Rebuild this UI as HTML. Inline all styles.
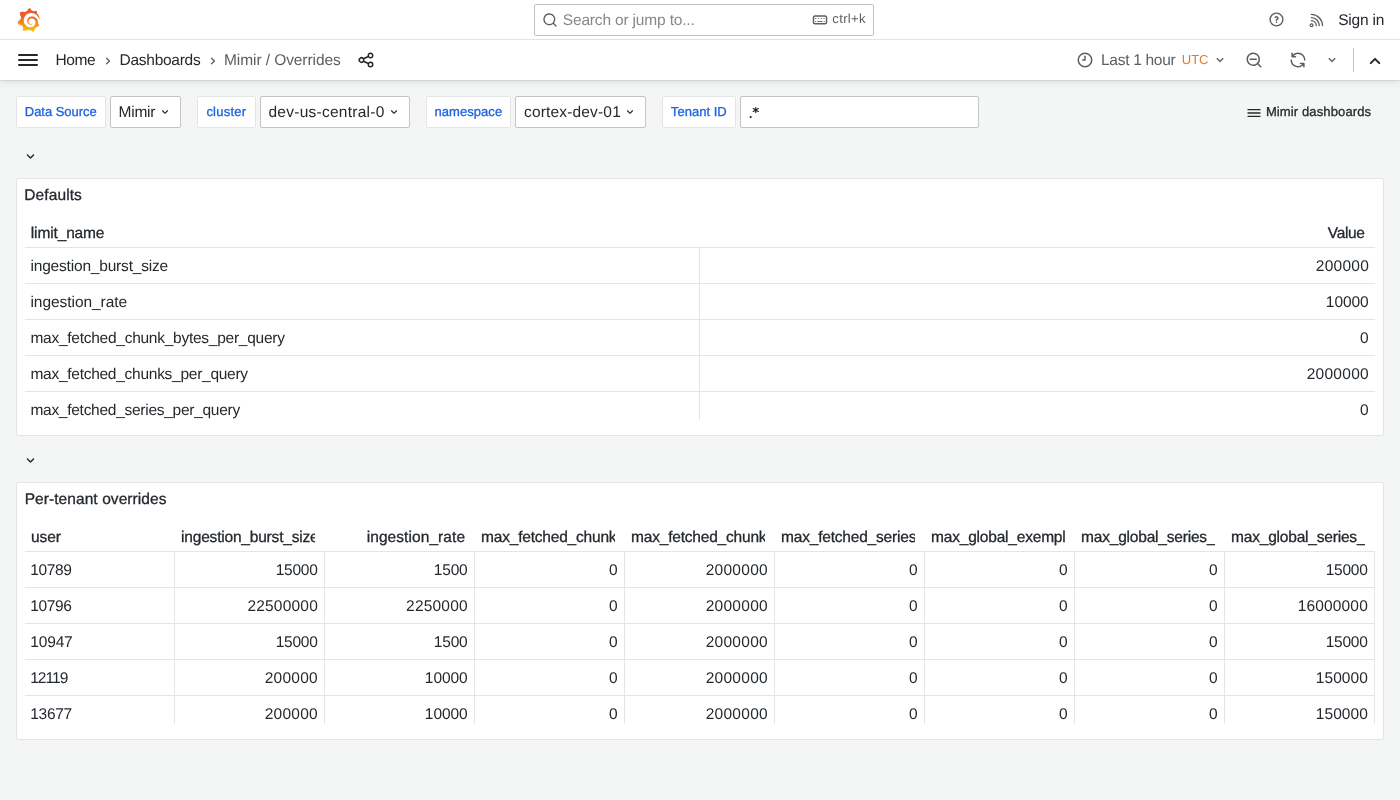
<!DOCTYPE html>
<html><head><meta charset="utf-8"><style>
*{box-sizing:border-box;margin:0;padding:0}
html,body{width:1400px;height:800px;overflow:hidden;background:#f4f5f5}
body{font-family:"Liberation Sans",sans-serif;color:#24292e;text-rendering:geometricPrecision}
#root{position:absolute;left:0;top:0;width:1400px;height:800px;background:#f4f5f5;will-change:transform;overflow:hidden}
.a{position:absolute}
.t{position:absolute;white-space:pre;line-height:20px}
svg{position:absolute;overflow:visible}
.lbl{position:absolute;top:96px;height:32px;background:#fff;border:1px solid #e4e5e6;border-radius:2px}
.sel{position:absolute;top:96px;height:32px;background:#fff;border:1px solid #c3c4c6;border-radius:2px}
.panel{position:absolute;left:16px;width:1368px;background:#fff;border:1px solid #e4e5e6;border-radius:2px}
.hl{position:absolute;height:1px;background:#e4e5e6}
.vl{position:absolute;width:1px;background:#e4e5e6}
</style></head><body><div id="root">
<div class="a" style="left:0;top:0;width:1400px;height:40px;background:#fff;border-bottom:1px solid #e4e5e6"></div>
<div class="a" style="left:0;top:40px;width:1400px;height:40px;background:#fff;box-shadow:0 1px 1px rgba(0,0,0,0.06),0 2px 4px rgba(0,0,0,0.05),0 4px 9px rgba(0,0,0,0.04)"></div>
<svg style="left:16.8px;top:8.2px" width="23.13" height="24.05" viewBox="0 0 351 365"><defs><linearGradient id="lg" gradientUnits="userSpaceOnUse" x1="175.5" y1="125" x2="175.5" y2="445"><stop offset="0" stop-color="#F05A28"/><stop offset="1" stop-color="#FFF100"/></linearGradient></defs><path fill="url(#lg)" d="M342,161.2c-0.6-6.1-1.6-13.1-3.6-20.9c-1.9-7.7-4.9-16.2-9.3-25c-4.4-8.8-10.2-17.9-17.7-26.8 c-2.9-3.5-6.1-6.9-9.5-10.2c5.1-20.3-6.2-37.9-6.2-37.9c-19.5-1.2-31.9,6.1-36.5,9.4c-0.8-0.3-1.5-0.7-2.3-1 c-3.3-1.300-6.7-2.6-10.3-3.7c-3.5-1.1-7.1-2.1-10.8-3c-3.7-0.9-7.4-1.6-11.2-2.2c-0.7-0.1-1.3-0.2-2-0.3 c-8.5-27.2-32.9-38.6-32.9-38.6c-27.3,17.3-32.4,41.5-32.4,41.5s-0.1,0.5-0.3,1.4c-1.5,0.4-3,0.9-4.5,1.3c-2.1,0.6-4.2,1.4-6.2,2.2 c-2.1,0.8-4.1,1.6-6.2,2.5c-4.1,1.8-8.2,3.8-12.2,6c-3.9,2.2-7.7,4.6-11.4,7.1c-0.5-0.2-1-0.4-1-0.4c-37.8-14.4-71.3,2.9-71.3,2.9 c-3.1,40.2,15.1,65.5,18.7,70.1c-0.9,2.5-1.7,5-2.5,7.5c-2.8,9.1-4.900,18.4-6.2,28.1c-0.2,1.4-0.4,2.8-0.5,4.2 C18.8,192.7,8.5,228,8.5,228c29.1,33.5,63.1,35.6,63.1,35.6c0,0,0.1-0.1,0.1-0.1c4.3,7.7,9.3,15,15,21.9c2.4,2.9,4.9,5.7,7.5,8.3 c-10.6,30.4,1.5,55.6,1.5,55.6c32.4,1.2,53.7-14.2,58.2-17.7c3.2,1.1,6.5,2.1,9.8,2.9c10,2.6,20.2,4.1,30.4,4.5 c2.5,0.1,5.1,0.2,7.6,0.1l1.2,0l0.8,0l1.6,0l1.6-0.1l0,0.1c15.3,21.8,42.1,24.9,42.1,24.9c19.1-20.1,20.2-40.1,20.2-44.4l0,0 c0,0,0-0.1,0-0.3c0-0.4,0-0.6,0-0.6l0,0c0-0.3,0-0.6,0-0.9c4-2.8,7.8-5.8,11.4-9.1c7.6-6.9,14.3-14.8,19.900-23.3 c0.5-0.8,1-1.6,1.5-2.4c21.6,1.2,36.9-13.4,36.9-13.4c-3.6-22.5-16.4-33.5-19.1-35.6l0,0c0,0-0.1-0.1-0.3-0.2 c-0.2-0.1-0.2-0.2-0.2-0.2c0,0,0,0,0,0c-0.1-0.1-0.3-0.2-0.5-0.3c0.1-1.4,0.2-2.7,0.3-4.1c0.2-2.4,0.2-4.9,0.2-7.3l0-1.8l0-0.9 l0-0.5c0-0.6,0-0.4,0-0.6l-0.1-1.5l-0.1-2c0-0.7-0.1-1.3-0.2-1.9c-0.1-0.6-0.1-1.3-0.2-1.9l-0.2-1.9l-0.3-1.9 c-0.4-2.5-0.8-4.9-1.4-7.4c-2.3-9.7-6.1-18.9-11-27.2c-5-8.3-11.2-15.6-18.3-21.8c-7-6.2-14.9-11.2-23.1-14.9 c-8.3-3.7-16.9-6.1-25.5-7.2c-4.3-0.6-8.6-0.8-12.9-0.7l-1.6,0l-0.4,0c-0.1,0-0.6,0-0.5,0l-0.7,0l-1.6,0.1c-0.6,0-1.2,0.1-1.7,0.1 c-2.2,0.2-4.4,0.5-6.5,0.9c-8.6,1.6-16.7,4.7-23.8,9c-7.1,4.3-13.3,9.6-18.3,15.6c-5,6-8.9,12.7-11.6,19.6c-2.7,6.9-4.2,14.1-4.6,21 c-0.1,1.7-0.1,3.5-0.1,5.2c0,0.4,0,0.9,0,1.3l0.1,1.4c0.1,0.8,0.1,1.7,0.2,2.5c0.3,3.5,1,6.9,1.9,10.1c1.9,6.5,4.9,12.4,8.6,17.4 c3.7,5,8.2,9.1,12.9,12.4c4.7,3.2,9.8,5.5,14.8,7c5,1.5,10,2.1,14.7,2.1c0.6,0,1.2,0,1.7,0c0.3,0,0.6,0,0.9,0c0.3,0,0.6,0,0.9-0.1 c0.5,0,1-0.1,1.5-0.1c0.1,0,0.3,0,0.4-0.1l0.5-0.1c0.3,0,0.6-0.1,0.9-0.1c0.6-0.1,1.1-0.2,1.7-0.3c0.6-0.1,1.1-0.2,1.6-0.4 c1.1-0.2,2.1-0.6,3.1-0.9c2-0.7,4-1.5,5.7-2.4c1.8-0.9,3.4-2,5-3c0.4-0.3,0.9-0.6,1.3-1c1.6-1.3,1.9-3.7,0.6-5.3 c-1.1-1.4-3.1-1.8-4.7-0.9c-0.4,0.2-0.8,0.4-1.2,0.6c-1.4,0.7-2.8,1.3-4.3,1.8c-1.5,0.5-3.1,0.9-4.7,1.2c-0.8,0.1-1.6,0.2-2.5,0.3 c-0.4,0-0.8,0.1-1.3,0.1c-0.4,0-0.9,0-1.2,0c-0.4,0-0.8,0-1.2,0c-0.5,0-1,0-1.5-0.1c0,0-0.3,0-0.1,0l-0.2,0l-0.3,0 c-0.2,0-0.5,0-0.7-0.1c-0.5-0.1-0.9-0.1-1.4-0.2c-3.7-0.5-7.4-1.6-10.9-3.2c-3.6-1.6-7-3.8-10.1-6.6c-3.1-2.8-5.8-6.1-7.9-9.9 c-2.1-3.8-3.6-8-4.3-12.4c-0.3-2.2-0.5-4.5-0.4-6.7c0-0.6,0.1-1.2,0.1-1.8c0,0.2,0-0.1,0-0.1l0-0.2l0-0.5c0-0.3,0.1-0.6,0.1-0.9 c0.1-1.2,0.3-2.4,0.5-3.6c1.7-9.6,6.5-19,13.9-26.1c1.9-1.8,3.9-3.4,6-4.9c2.1-1.5,4.4-2.8,6.8-3.9c2.4-1.1,4.8-2,7.4-2.7 c2.5-0.7,5.1-1.1,7.8-1.4c1.3-0.1,2.6-0.2,4-0.2c0.4,0,0.6,0,0.9,0l1.1,0l0.7,0c0.3,0,0,0,0.1,0l0.3,0l1.1,0.1 c2.9,0.2,5.7,0.6,8.5,1.3c5.6,1.2,11.1,3.3,16.2,6.1c10.2,5.7,18.9,14.5,24.2,25.1c2.7,5.3,4.6,11,5.5,16.9c0.2,1.5,0.4,3,0.5,4.5 l0.1,1.1l0.1,1.1c0,0.4,0,0.8,0,1.1c0,0.4,0,0.8,0,1.1l0,1l0,1.1c0,0.7-0.1,1.9-0.1,2.6c-0.1,1.6-0.3,3.3-0.5,4.9 c-0.2,1.6-0.5,3.2-0.8,4.8c-0.3,1.6-0.7,3.2-1.1,4.7c-0.8,3.1-1.8,6.2-3,9.3c-2.4,6-5.6,11.8-9.4,17.1 c-7.7,10.6-18.2,19.2-30.2,24.7c-6,2.7-12.3,4.7-18.8,5.7c-3.2,0.6-6.5,0.9-9.8,1l-0.6,0l-0.5,0l-1.1,0l-1.6,0l-0.8,0 c0.4,0-0.1,0-0.1,0l-0.3,0c-1.8,0-3.5-0.1-5.3-0.3c-7-0.5-13.9-1.8-20.6-3.7c-6.7-1.9-13.2-4.6-19.4-7.8 c-12.3-6.6-23.4-15.6-32-26.5c-4.3-5.4-8.1-11.3-11.2-17.4c-3.1-6.1-5.6-12.6-7.4-19.1c-1.8-6.6-2.9-13.3-3.4-20.1l-0.1-1.3l0-0.3 l0-0.3l0-0.6l0-1.1l0-0.3l0-0.4l0-0.8l0-1.6l0-0.3c0,0,0,0.1,0-0.1l0-0.6c0-0.8,0-1.7,0-2.5c0.1-3.3,0.4-6.8,0.8-10.2 c0.4-3.4,1-6.9,1.7-10.3c0.7-3.4,1.5-6.8,2.5-10.2c1.9-6.7,4.3-13.2,7.1-19.3c5.7-12.2,13.1-23.1,22-31.8c2.2-2.2,4.5-4.2,6.9-6.2 c2.4-1.9,4.9-3.7,7.5-5.4c2.5-1.7,5.2-3.2,7.9-4.6c1.3-0.7,2.7-1.4,4.1-2c0.7-0.3,1.4-0.6,2.1-0.9c0.7-0.3,1.4-0.6,2.1-0.9 c2.8-1.2,5.7-2.2,8.7-3.1c0.7-0.2,1.5-0.4,2.2-0.7c0.7-0.2,1.5-0.4,2.2-0.6c1.5-0.4,3-0.8,4.5-1.1c0.7-0.2,1.5-0.3,2.3-0.5 c0.8-0.2,1.5-0.3,2.3-0.5c0.8-0.1,1.5-0.3,2.3-0.4l1.1-0.2l1.2-0.2c0.8-0.1,1.5-0.2,2.3-0.3c0.9-0.1,1.7-0.2,2.6-0.3 c0.7-0.1,1.9-0.2,2.6-0.3c0.5-0.1,1.1-0.1,1.6-0.2l1.1-0.1l0.5,0l0.6,0c0.9-0.1,1.7-0.1,2.6-0.2l1.3-0.1c0,0,0.5,0,0.1,0l0.3,0 l0.6,0c0.7,0,1.5-0.1,2.2-0.1c2.9-0.1,5.9-0.1,8.8,0c5.8,0.2,11.5,0.9,17,1.9c11.1,2.1,21.5,5.6,31,10.3 c9.5,4.6,17.9,10.3,25.3,16.5c0.5,0.4,0.9,0.8,1.4,1.2c0.4,0.4,0.9,0.8,1.3,1.2c0.9,0.8,1.7,1.6,2.6,2.4c0.9,0.8,1.7,1.6,2.5,2.4 c0.8,0.8,1.6,1.6,2.4,2.5c3.1,3.3,6,6.6,8.6,10c5.2,6.7,9.4,13.5,12.7,19.9c0.2,0.4,0.4,0.8,0.6,1.2c0.2,0.4,0.4,0.8,0.6,1.2 c0.4,0.8,0.8,1.6,1.1,2.4c0.4,0.8,0.7,1.5,1.1,2.3c0.3,0.8,0.7,1.5,1,2.3c1.2,3,2.4,5.9,3.3,8.6c1.5,4.4,2.6,8.3,3.5,11.7 c0.3,1.4,1.6,2.3,3,2.1c1.5-0.1,2.6-1.3,2.6-2.8C342.6,170.4,342.5,166.1,342,161.2z"/></svg>
<div class="a" style="left:534px;top:4px;width:340px;height:32px;border:1px solid #c3c4c6;border-radius:2px;background:#fff"></div>
<svg style="left:541.8px;top:11.8px" width="16" height="16" viewBox="0 0 24 24"><path fill="#5b5f63" d="M21.71,20.29,18,16.61A9,9,0,1,0,16.61,18l3.68,3.68a1,1,0,0,0,1.42,0A1,1,0,0,0,21.71,20.29ZM11,18a7,7,0,1,1,7-7A7,7,0,0,1,11,18Z"/></svg>
<svg style="left:805px;top:8px" width="24" height="24" viewBox="0 0 24 24"><rect x="8.45" y="7.95" width="13.1" height="7.85" rx="1.6" fill="none" stroke="#5b5f63" stroke-width="1.45"/><g fill="#5b5f63"><rect x="9.9" y="10.1" width="1.2" height="0.85"/><rect x="12.65" y="10.1" width="1.2" height="0.85"/><rect x="15.65" y="10.1" width="1.2" height="0.85"/><rect x="18.4" y="10.1" width="1.2" height="0.85"/><rect x="9.9" y="13" width="1.2" height="0.85"/><rect x="12.4" y="13" width="5" height="0.9"/><rect x="18.65" y="13" width="1.2" height="0.85"/></g></svg>
<svg style="left:1268.4px;top:11.4px" width="17" height="17" viewBox="0 0 24 24"><path fill="#5b5f63" d="M11.29,15.29a1.58,1.58,0,0,0-.12.15.76.76,0,0,0-.09.18.64.64,0,0,0-.06.18,1.36,1.36,0,0,0,0,.2.84.84,0,0,0,.08.38.9.9,0,0,0,.54.54.94.94,0,0,0,.76,0,.9.9,0,0,0,.54-.54A1,1,0,0,0,13,16a1,1,0,0,0-.29-.71A1,1,0,0,0,11.29,15.29ZM12,2A10,10,0,1,0,22,12,10,10,0,0,0,12,2Zm0,18a8,8,0,1,1,8-8A8,8,0,0,1,12,20ZM12,7A3,3,0,0,0,9.4,8.5a1,1,0,1,0,1.73,1A1,1,0,0,1,12,9a1,1,0,0,1,0,2,1,1,0,0,0-1,1v1a1,1,0,0,0,2,0v-.18A3,3,0,0,0,12,7Z"/></svg>
<svg style="left:1304px;top:8px" width="24" height="24" viewBox="0 0 24 24"><g fill="none" stroke="#5b5f63" stroke-width="1.35" stroke-linecap="round"><path d="M7.4 12.6A5.1 5.1 0 0 1 12.3 17.6M7.4 9.6A8.1 8.1 0 0 1 15.3 17.6M7.4 6.45A11.2 11.2 0 0 1 18.5 17.6"/><circle cx="7.6" cy="17.2" r="1.45" stroke-width="1.25"/></g></svg>
<svg style="left:16px;top:48px" width="24" height="24" viewBox="0 0 24 24"><path fill="#24292e" d="M3,8H21a1,1,0,0,0,0-2H3A1,1,0,0,0,3,8Zm18,8H3a1,1,0,0,0,0,2H21a1,1,0,0,0,0-2Zm0-5H3a1,1,0,0,0,0,2H21a1,1,0,0,0,0-2Z"/></svg>
<svg style="left:99.8px;top:52.9px" width="16" height="16" viewBox="0 0 24 24"><path fill="#5b5f63" d="M14.83,11.29,10.59,7.05a1,1,0,0,0-1.42,0,1,1,0,0,0,0,1.41L12.71,12,9.17,15.54a1,1,0,0,0,0,1.41,1,1,0,0,0,.71.3,1,1,0,0,0,.71-.3l4.24-4.24A1,1,0,0,0,14.83,11.29Z"/></svg>
<svg style="left:205px;top:52.9px" width="16" height="16" viewBox="0 0 24 24"><path fill="#5b5f63" d="M14.83,11.29,10.59,7.05a1,1,0,0,0-1.42,0,1,1,0,0,0,0,1.41L12.71,12,9.17,15.54a1,1,0,0,0,0,1.41,1,1,0,0,0,.71.3,1,1,0,0,0,.71-.3l4.24-4.24A1,1,0,0,0,14.83,11.29Z"/></svg>
<svg style="left:357.2px;top:50.85px" width="18" height="18" viewBox="0 0 24 24"><path fill="#24292e" d="M18,14a4,4,0,0,0-3.08,1.48l-5.1-2.35a3.64,3.64,0,0,0,0-2.26l5.1-2.35A4,4,0,1,0,14,6a4.17,4.17,0,0,0,.07.71L8.79,9.14a4,4,0,1,0,0,5.72l5.28,2.43A4.170,4.17,0,0,0,14,18a4,4,0,1,0,4-4ZM18,4a2,2,0,1,1-2,2A2,2,0,0,1,18,4ZM6,14a2,2,0,1,1,2-2A2,2,0,0,1,6,14Zm12,6a2,2,0,1,1,2-2A2,2,0,0,1,18,20Z"/></svg>
<svg style="left:1076px;top:51px" width="18" height="18" viewBox="0 0 24 24"><path fill="#5b5f63" d="M12,2A10,10,0,1,0,22,12,10,10,0,0,0,12,2Zm0,18a8,8,0,1,1,8-8A8,8,0,0,1,12,20Zm0-14a1,1,0,0,0-1,1v4H9a1,1,0,0,0,0,2h3a1,1,0,0,0,1-1V7A1,1,0,0,0,12,6Z"/></svg>
<svg style="left:1212px;top:52px" width="16" height="16" viewBox="0 0 24 24"><path fill="#5b5f63" d="M17,9.17a1,1,0,0,0-1.41,0L12,12.71,8.46,9.17a1,1,0,0,0-1.41,0,1,1,0,0,0,0,1.42l4.24,4.24a1,1,0,0,0,1.42,0L17,10.59A1,1,0,0,0,17,9.17Z"/></svg>
<svg style="left:1245px;top:51px" width="18" height="18" viewBox="0 0 24 24"><path fill="#5b5f63" d="M21.71,20.29,18,16.61A9,9,0,1,0,16.61,18l3.68,3.68a1,1,0,0,0,1.42,0A1,1,0,0,0,21.71,20.29ZM11,18a7,7,0,1,1,7-7A7,7,0,0,1,11,18Zm4-8H7a1,1,0,0,0,0,2h8a1,1,0,0,0,0-2Z"/></svg>
<svg style="left:1289px;top:51px" width="18" height="18" viewBox="0 0 24 24"><path fill="#5b5f63" d="M19.91,15.51H15.38a1,1,0,0,0,0,2h2.4A8,8,0,0,1,4,12a1,1,0,0,0-2,0,10,10,0,0,0,16.88,7.23V21a1,1,0,0,0,2,0V16.5A1,1,0,0,0,19.91,15.51ZM12,2A10,10,0,0,0,5.12,4.77V3a1,1,0,0,0-2,0V7.5a1,1,0,0,0,1,1h4.5a1,1,0,0,0,0-2H6.22A8,8,0,0,1,20,12a1,1,0,0,0,2,0A10,10,0,0,0,12,2Z"/></svg>
<svg style="left:1324px;top:52px" width="16" height="16" viewBox="0 0 24 24"><path fill="#5b5f63" d="M17,9.17a1,1,0,0,0-1.41,0L12,12.71,8.46,9.17a1,1,0,0,0-1.41,0,1,1,0,0,0,0,1.42l4.24,4.24a1,1,0,0,0,1.42,0L17,10.59A1,1,0,0,0,17,9.17Z"/></svg>
<div class="a" style="left:1353px;top:48px;width:1px;height:24px;background:#c3c4c6"></div>
<svg style="left:1362.85px;top:48.7px" width="24" height="24" viewBox="0 0 24 24"><path fill="#24292e" d="M17,13.41,12.71,9.17a1,1,0,0,0-1.42,0L7.05,13.41a1,1,0,0,0,0,1.42,1,1,0,0,0,1.41,0L12,11.29l3.54,3.54a1,1,0,0,0,.7.29,1,1,0,0,0,.71-.29A1,1,0,0,0,17,13.41Z"/></svg>
<div class="lbl" style="left:16px;width:90px"></div>
<div class="sel" style="left:110px;width:71px"></div><svg style="left:158.05px;top:104.6px" width="14" height="14" viewBox="0 0 24 24"><path fill="#24292e" d="M17,9.17a1,1,0,0,0-1.41,0L12,12.71,8.46,9.17a1,1,0,0,0-1.41,0,1,1,0,0,0,0,1.42l4.24,4.24a1,1,0,0,0,1.42,0L17,10.59A1,1,0,0,0,17,9.17Z"/></svg>
<div class="lbl" style="left:197px;width:59px"></div>
<div class="sel" style="left:260px;width:150px"></div><svg style="left:387px;top:104.8px" width="14" height="14" viewBox="0 0 24 24"><path fill="#24292e" d="M17,9.17a1,1,0,0,0-1.41,0L12,12.71,8.46,9.17a1,1,0,0,0-1.41,0,1,1,0,0,0,0,1.42l4.24,4.24a1,1,0,0,0,1.42,0L17,10.59A1,1,0,0,0,17,9.17Z"/></svg>
<div class="lbl" style="left:426px;width:85px"></div>
<div class="sel" style="left:515px;width:131px"></div><svg style="left:623.1px;top:104.8px" width="14" height="14" viewBox="0 0 24 24"><path fill="#24292e" d="M17,9.17a1,1,0,0,0-1.41,0L12,12.71,8.46,9.17a1,1,0,0,0-1.41,0,1,1,0,0,0,0,1.42l4.24,4.24a1,1,0,0,0,1.42,0L17,10.59A1,1,0,0,0,17,9.17Z"/></svg>
<div class="lbl" style="left:662px;width:74px"></div>
<div class="sel" style="left:740px;width:239px"></div>
<svg style="left:740px;top:100px" width="30" height="25" viewBox="0 0 30 25"><rect x="9.75" y="16.1" width="1.8" height="1.8" rx="0.4" fill="#24292e"/><g stroke="#24292e" stroke-width="1.25" stroke-linecap="round"><path d="M15.75 7.5v4.9M13.2 8.55l5.1 2.9M13.2 11.45l5.1-2.9"/></g></svg>
<svg style="left:1245.7px;top:104.6px" width="16" height="16" viewBox="0 0 24 24"><path fill="#24292e" d="M3,8H21a1,1,0,0,0,0-2H3A1,1,0,0,0,3,8Zm18,8H3a1,1,0,0,0,0,2H21a1,1,0,0,0,0-2Zm0-5H3a1,1,0,0,0,0,2H21a1,1,0,0,0,0-2Z"/></svg>
<svg style="left:22px;top:147.9px" width="17" height="17" viewBox="0 0 24 24"><path fill="#24292e" d="M17,9.17a1,1,0,0,0-1.41,0L12,12.71,8.46,9.17a1,1,0,0,0-1.41,0,1,1,0,0,0,0,1.42l4.24,4.24a1,1,0,0,0,1.42,0L17,10.59A1,1,0,0,0,17,9.17Z"/></svg>
<svg style="left:21.8px;top:451.7px" width="17" height="17" viewBox="0 0 24 24"><path fill="#24292e" d="M17,9.17a1,1,0,0,0-1.41,0L12,12.71,8.46,9.17a1,1,0,0,0-1.41,0,1,1,0,0,0,0,1.42l4.24,4.24a1,1,0,0,0,1.42,0L17,10.59A1,1,0,0,0,17,9.17Z"/></svg>
<div class="panel" style="top:178px;height:258px"></div>
<div class="hl" style="left:25px;top:247px;width:1350px"></div>
<div class="hl" style="left:25px;top:283px;width:1350px"></div>
<div class="hl" style="left:25px;top:319px;width:1350px"></div>
<div class="hl" style="left:25px;top:355px;width:1350px"></div>
<div class="hl" style="left:25px;top:391px;width:1350px"></div>
<div class="vl" style="left:699px;top:248px;height:172px"></div>
<div class="panel" style="top:482px;height:258px"></div>
<div class="hl" style="left:25px;top:551px;width:1350px"></div>
<div class="hl" style="left:25px;top:587px;width:1350px"></div>
<div class="hl" style="left:25px;top:623px;width:1350px"></div>
<div class="hl" style="left:25px;top:659px;width:1350px"></div>
<div class="hl" style="left:25px;top:695px;width:1350px"></div>
<div class="vl" style="left:174px;top:552px;height:172px"></div>
<div class="vl" style="left:324px;top:552px;height:172px"></div>
<div class="vl" style="left:474px;top:552px;height:172px"></div>
<div class="vl" style="left:624px;top:552px;height:172px"></div>
<div class="vl" style="left:774px;top:552px;height:172px"></div>
<div class="vl" style="left:924px;top:552px;height:172px"></div>
<div class="vl" style="left:1074px;top:552px;height:172px"></div>
<div class="vl" style="left:1224px;top:552px;height:172px"></div>
<div class="vl" style="left:1374px;top:552px;height:172px"></div>
<div class="t" style="left:562.80px;top:11px;font-size:15.5px;color:#85888c;letter-spacing:-0.172px">Search or jump to...</div>
<div class="t" style="left:832.32px;top:9px;font-size:13px;color:#5b5f63;letter-spacing:0.363px">ctrl+k</div>
<div class="t" style="left:1338.20px;top:11px;font-size:15.5px;color:#24292e;letter-spacing:-0.209px">Sign in</div>
<div class="t" style="left:55.62px;top:51px;font-size:15.5px;color:#24292e;letter-spacing:-0.439px">Home</div>
<div class="t" style="left:119.52px;top:51px;font-size:15.5px;color:#24292e;letter-spacing:-0.263px">Dashboards</div>
<div class="t" style="left:224.02px;top:51px;font-size:15.5px;color:#5b5f63;letter-spacing:-0.08px">Mimir / Overrides</div>
<div class="t" style="left:1101.02px;top:51px;font-size:15.5px;color:#5b5f63;letter-spacing:-0.292px">Last 1 hour</div>
<div class="t" style="left:1181.80px;top:50px;font-size:13px;color:#e8781e;letter-spacing:-0.05px">UTC</div>
<div class="t" style="left:24.79px;top:102px;font-size:13px;color:#1f62e0;letter-spacing:-0.036px;-webkit-text-stroke:0.3px #1f62e0">Data Source</div>
<div class="t" style="left:118.42px;top:103px;font-size:15.5px;color:#24292e;letter-spacing:-0.189px">Mimir</div>
<div class="t" style="left:206.39px;top:102px;font-size:13px;color:#1f62e0;letter-spacing:0.23px;-webkit-text-stroke:0.3px #1f62e0">cluster</div>
<div class="t" style="left:268.49px;top:103px;font-size:15.5px;color:#24292e;letter-spacing:0.259px">dev-us-central-0</div>
<div class="t" style="left:434.43px;top:102px;font-size:13px;color:#1f62e0;letter-spacing:0.061px;-webkit-text-stroke:0.3px #1f62e0">namespace</div>
<div class="t" style="left:524.09px;top:103px;font-size:15.5px;color:#24292e;letter-spacing:0.159px">cortex-dev-01</div>
<div class="t" style="left:670.87px;top:102px;font-size:13px;color:#1f62e0;letter-spacing:0.031px;-webkit-text-stroke:0.3px #1f62e0">Tenant ID</div>
<div class="t" style="left:1265.89px;top:102px;font-size:13px;color:#24292e;letter-spacing:0.123px;-webkit-text-stroke:0.3px #24292e">Mimir dashboards</div>
<div class="t" style="left:24.34px;top:186px;font-size:15.5px;color:#24292e;letter-spacing:0.097px;-webkit-text-stroke:0.3px #24292e">Defaults</div>
<div class="t" style="left:30.81px;top:224px;font-size:15.5px;color:#24292e;letter-spacing:-0.139px;-webkit-text-stroke:0.3px #24292e">limit_name</div>
<div class="t" style="left:1327.85px;top:224px;font-size:15.5px;color:#24292e;letter-spacing:-0.385px;-webkit-text-stroke:0.3px #24292e">Value</div>
<div class="t" style="left:30.46px;top:257px;font-size:15.5px;color:#24292e;letter-spacing:-0.187px">ingestion_burst_size</div>
<div class="t" style="left:1315.87px;top:257px;font-size:15.5px;color:#24292e;letter-spacing:0.24px">200000</div>
<div class="t" style="left:30.46px;top:293px;font-size:15.5px;color:#24292e;letter-spacing:-0.051px">ingestion_rate</div>
<div class="t" style="left:1325.87px;top:293px;font-size:15.5px;color:#24292e;letter-spacing:-0.067px">10000</div>
<div class="t" style="left:30.41px;top:329px;font-size:15.5px;color:#24292e;letter-spacing:-0.26px">max_fetched_chunk_bytes_per_query</div>
<div class="t" style="left:1360.12px;top:329px;font-size:15.5px;color:#24292e;letter-spacing:0px">0</div>
<div class="t" style="left:30.41px;top:365px;font-size:15.5px;color:#24292e;letter-spacing:-0.266px">max_fetched_chunks_per_query</div>
<div class="t" style="left:1306.63px;top:365px;font-size:15.5px;color:#24292e;letter-spacing:0.294px">2000000</div>
<div class="t" style="left:30.41px;top:401px;font-size:15.5px;color:#24292e;letter-spacing:-0.272px">max_fetched_series_per_query</div>
<div class="t" style="left:1360.12px;top:401px;font-size:15.5px;color:#24292e;letter-spacing:0px">0</div>
<div class="t" style="left:24.64px;top:490px;font-size:15.5px;color:#24292e;letter-spacing:0.075px;-webkit-text-stroke:0.3px #24292e">Per-tenant overrides</div>
<div class="t" style="left:31.01px;top:528px;font-size:15.5px;color:#24292e;letter-spacing:-0.1px;-webkit-text-stroke:0.3px #24292e">user</div>
<div class="t" style="left:181.12px;top:528px;font-size:15.5px;color:#24292e;letter-spacing:-0.2px;-webkit-text-stroke:0.3px #24292e;width:133.48px;overflow:hidden">ingestion_burst_size</div>
<div class="t" style="left:366.69px;top:528px;font-size:15.5px;color:#24292e;letter-spacing:0.074px;-webkit-text-stroke:0.3px #24292e">ingestion_rate</div>
<div class="t" style="left:481.08px;top:528px;font-size:15.5px;color:#24292e;letter-spacing:-0.2px;-webkit-text-stroke:0.3px #24292e;width:133.52px;overflow:hidden">max_fetched_chunk_bytes_per_query</div>
<div class="t" style="left:631.08px;top:528px;font-size:15.5px;color:#24292e;letter-spacing:-0.2px;-webkit-text-stroke:0.3px #24292e;width:133.52px;overflow:hidden">max_fetched_chunks_per_query</div>
<div class="t" style="left:781.08px;top:528px;font-size:15.5px;color:#24292e;letter-spacing:-0.2px;-webkit-text-stroke:0.3px #24292e;width:133.52px;overflow:hidden">max_fetched_series_per_query</div>
<div class="t" style="left:931.08px;top:528px;font-size:15.5px;color:#24292e;letter-spacing:-0.2px;-webkit-text-stroke:0.3px #24292e;width:133.52px;overflow:hidden">max_global_exemplars_per_user</div>
<div class="t" style="left:1081.08px;top:528px;font-size:15.5px;color:#24292e;letter-spacing:-0.2px;-webkit-text-stroke:0.3px #24292e;width:133.52px;overflow:hidden">max_global_series_per_metric</div>
<div class="t" style="left:1231.08px;top:528px;font-size:15.5px;color:#24292e;letter-spacing:-0.2px;-webkit-text-stroke:0.3px #24292e;width:133.52px;overflow:hidden">max_global_series_per_user</div>
<div class="t" style="left:30.19px;top:561px;font-size:15.5px;color:#24292e;letter-spacing:-0.362px">10789</div>
<div class="t" style="left:275.63px;top:561px;font-size:15.5px;color:#24292e;letter-spacing:-0.217px">15000</div>
<div class="t" style="left:433.87px;top:561px;font-size:15.5px;color:#24292e;letter-spacing:-0.235px">1500</div>
<div class="t" style="left:609.12px;top:561px;font-size:15.5px;color:#24292e;letter-spacing:0px">0</div>
<div class="t" style="left:705.63px;top:561px;font-size:15.5px;color:#24292e;letter-spacing:0.294px">2000000</div>
<div class="t" style="left:909.12px;top:561px;font-size:15.5px;color:#24292e;letter-spacing:0px">0</div>
<div class="t" style="left:1059.12px;top:561px;font-size:15.5px;color:#24292e;letter-spacing:0px">0</div>
<div class="t" style="left:1209.12px;top:561px;font-size:15.5px;color:#24292e;letter-spacing:0px">0</div>
<div class="t" style="left:1325.63px;top:561px;font-size:15.5px;color:#24292e;letter-spacing:-0.217px">15000</div>
<div class="t" style="left:30.19px;top:597px;font-size:15.5px;color:#24292e;letter-spacing:-0.37px">10796</div>
<div class="t" style="left:247.39px;top:597px;font-size:15.5px;color:#24292e;letter-spacing:0.207px">22500000</div>
<div class="t" style="left:406.12px;top:597px;font-size:15.5px;color:#24292e;letter-spacing:0.194px">2250000</div>
<div class="t" style="left:609.12px;top:597px;font-size:15.5px;color:#24292e;letter-spacing:0px">0</div>
<div class="t" style="left:705.63px;top:597px;font-size:15.5px;color:#24292e;letter-spacing:0.294px">2000000</div>
<div class="t" style="left:909.12px;top:597px;font-size:15.5px;color:#24292e;letter-spacing:0px">0</div>
<div class="t" style="left:1059.12px;top:597px;font-size:15.5px;color:#24292e;letter-spacing:0px">0</div>
<div class="t" style="left:1209.12px;top:597px;font-size:15.5px;color:#24292e;letter-spacing:0px">0</div>
<div class="t" style="left:1297.63px;top:597px;font-size:15.5px;color:#24292e;letter-spacing:0.168px">16000000</div>
<div class="t" style="left:30.19px;top:633px;font-size:15.5px;color:#24292e;letter-spacing:-0.138px">10947</div>
<div class="t" style="left:275.63px;top:633px;font-size:15.5px;color:#24292e;letter-spacing:-0.217px">15000</div>
<div class="t" style="left:433.87px;top:633px;font-size:15.5px;color:#24292e;letter-spacing:-0.235px">1500</div>
<div class="t" style="left:609.12px;top:633px;font-size:15.5px;color:#24292e;letter-spacing:0px">0</div>
<div class="t" style="left:705.63px;top:633px;font-size:15.5px;color:#24292e;letter-spacing:0.294px">2000000</div>
<div class="t" style="left:909.12px;top:633px;font-size:15.5px;color:#24292e;letter-spacing:0px">0</div>
<div class="t" style="left:1059.12px;top:633px;font-size:15.5px;color:#24292e;letter-spacing:0px">0</div>
<div class="t" style="left:1209.12px;top:633px;font-size:15.5px;color:#24292e;letter-spacing:0px">0</div>
<div class="t" style="left:1325.63px;top:633px;font-size:15.5px;color:#24292e;letter-spacing:-0.217px">15000</div>
<div class="t" style="left:30.19px;top:669px;font-size:15.5px;color:#24292e;letter-spacing:-0.95px">12119</div>
<div class="t" style="left:264.63px;top:669px;font-size:15.5px;color:#24292e;letter-spacing:0.26px">200000</div>
<div class="t" style="left:424.87px;top:669px;font-size:15.5px;color:#24292e;letter-spacing:-0.067px">10000</div>
<div class="t" style="left:609.12px;top:669px;font-size:15.5px;color:#24292e;letter-spacing:0px">0</div>
<div class="t" style="left:705.63px;top:669px;font-size:15.5px;color:#24292e;letter-spacing:0.294px">2000000</div>
<div class="t" style="left:909.12px;top:669px;font-size:15.5px;color:#24292e;letter-spacing:0px">0</div>
<div class="t" style="left:1059.12px;top:669px;font-size:15.5px;color:#24292e;letter-spacing:0px">0</div>
<div class="t" style="left:1209.12px;top:669px;font-size:15.5px;color:#24292e;letter-spacing:0px">0</div>
<div class="t" style="left:1315.87px;top:669px;font-size:15.5px;color:#24292e;letter-spacing:0.045px">150000</div>
<div class="t" style="left:30.19px;top:705px;font-size:15.5px;color:#24292e;letter-spacing:-0.263px">13677</div>
<div class="t" style="left:264.63px;top:705px;font-size:15.5px;color:#24292e;letter-spacing:0.26px">200000</div>
<div class="t" style="left:424.87px;top:705px;font-size:15.5px;color:#24292e;letter-spacing:-0.067px">10000</div>
<div class="t" style="left:609.12px;top:705px;font-size:15.5px;color:#24292e;letter-spacing:0px">0</div>
<div class="t" style="left:705.63px;top:705px;font-size:15.5px;color:#24292e;letter-spacing:0.294px">2000000</div>
<div class="t" style="left:909.12px;top:705px;font-size:15.5px;color:#24292e;letter-spacing:0px">0</div>
<div class="t" style="left:1059.12px;top:705px;font-size:15.5px;color:#24292e;letter-spacing:0px">0</div>
<div class="t" style="left:1209.12px;top:705px;font-size:15.5px;color:#24292e;letter-spacing:0px">0</div>
<div class="t" style="left:1315.87px;top:705px;font-size:15.5px;color:#24292e;letter-spacing:0.045px">150000</div>
</div></body></html>
